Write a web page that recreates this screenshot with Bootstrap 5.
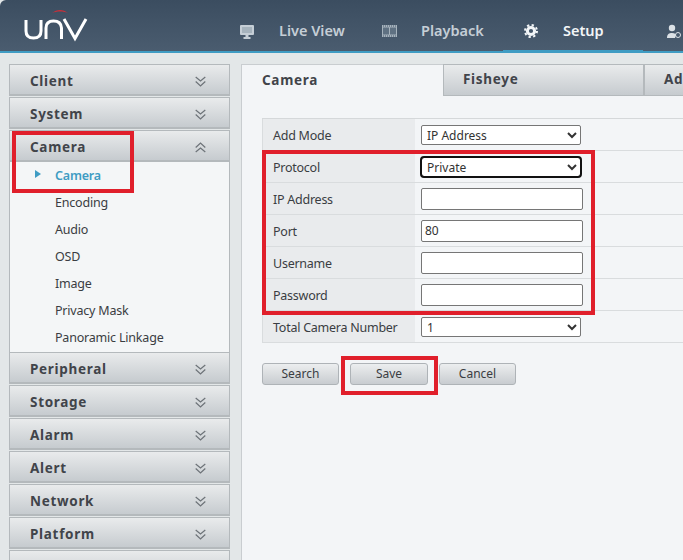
<!DOCTYPE html>
<html lang="en"><head><meta charset="utf-8"><title>Setup</title>
<link href="https://cdn.jsdelivr.net/npm/bootstrap@5.3.0/dist/css/bootstrap.min.css" rel="stylesheet">
<style>
html,body{height:560px;overflow:hidden}
body{background:#e3e7e8;font-family:"Noto Sans","Open Sans",sans-serif;color:#3a3d42;position:relative;font-size:13px}
.topbar{height:53px;background:linear-gradient(#3b4d60,#4a5c6f);border-bottom:2px solid #3f9cc3;border-top-left-radius:6px}
.logo-box{width:219px;height:50px;padding-left:24px}
.navlink{height:50px;padding-top:12px;color:#c5ced6;font-weight:600;font-size:14.5px;flex:none}
.navlink.on{color:#f2f5f7;border-bottom:3px solid #3f9cc3;height:53px}
.nav1{width:163px;padding-left:21px;gap:25px}.nav2{width:121px;gap:24px}.nav3{width:140px;padding-left:21px;gap:25px}
.nav4{padding-left:24px}
.main-row{height:507px;overflow:hidden}
.sidebox{width:241px;padding:11px 11px 0 9px;flex:none}
.sidehead{height:32px;margin-bottom:1px;padding:4px 23px 0 20px;background:linear-gradient(#e9ebec,#c6cbcf);border:1px solid #b4b9bc;border-bottom-width:2px;font-weight:700;font-size:13.5px;letter-spacing:.7px;color:#41444a}
.sidehead.open{margin-bottom:0}
.sublist{background:#f4f6f7;border-left:1px solid #b4b9bc;border-right:1px solid #b4b9bc;padding-bottom:1px}
.subitem{height:27px;padding:1px 0 0 45px;font-size:12.5px;letter-spacing:-.2px;color:#3a3d42;position:relative}
.subitem.on{color:#3f9cc3;font-weight:600}
.subitem svg{position:absolute;left:25px;top:8px}
.panel{width:442px;margin-top:11px;background:#f3f5f7;border-left:1px solid #c9cdd0;overflow:hidden;flex:none}
.tabs{height:32px}
.tabb{width:201px;height:32px;padding:0 0 1px 19px;font-weight:700;font-size:13.5px;letter-spacing:.7px;color:#41444a;background:linear-gradient(#e9ebec,#c6cbcf);border:1px solid #b4b9bc;flex:none}
.tabb.on{padding-left:20px;background:#f3f5f7;border:0;border-top:1px solid #c9cdd0}
.formbox{margin:22px 0 0 20px;border-top:1px solid #d5d8da}
.frow{height:32px;border-bottom:1px solid #d9dcde}
.flabel{width:153px;height:31px;background:#e9ebed;padding:4px 0 0 10px;font-size:12.500px;letter-spacing:-.25px;color:#3a3d42;border-left:1px solid #d9dcde;flex:none}
.fval{padding-left:6px}
.fsel,.finput{font-family:"Noto Sans","Open Sans",sans-serif;font-size:12px;color:#333;background:#fff;border:1px solid #767676;border-radius:2px;padding:0 0 0 3px;display:block}
.fsel{width:160px;height:20px;padding-left:1px}
.fsel.focus{outline:2px solid #111;outline-offset:-1px;border-radius:3px}
.finput{width:162px;height:22px}
.actions{margin:20px 0 0 20px;gap:11px}
.actbtn{width:77px;height:22px;padding:0;background:linear-gradient(#eceeef,#c8ccd0);border:1px solid #aeb3b7;border-radius:3px;font-size:12px;color:#3a3d42;line-height:1}
.actbtn.wider{width:78px}
.actbtn:hover{background:linear-gradient(#eceeef,#c8ccd0);color:#3a3d42;border-color:#aeb3b7}
.redbox{position:absolute;border:4px solid #e01f2b;pointer-events:none}
.rb1{left:12px;top:131px;width:122px;height:62px}
.rb2{left:262px;top:150px;width:333px;height:165px}
.rb3{left:341px;top:356px;width:97px;height:39px}
</style></head>
<body>
<div class="topbar d-flex align-items-start">
  <div class="logo-box d-flex align-items-center">
    <svg width="64" height="34" viewBox="0 0 64 34" fill="none"><path d="M28 5c5-4 11-4 16 0c-5-2-11-2-16 0z" fill="#c8303a"/><path d="M2 12v11q0 7 7.500 7t7.500-7V12" stroke="#fff" stroke-width="3"/><path d="M22 31V20q0-7 7.500-7t8 7v11" stroke="#fff" stroke-width="3"/><path d="M40 11l11 19.500L62 11" stroke="#fff" stroke-width="3"/></svg>
  </div>
  <div class="navlink nav1 d-flex align-items-center">
    <svg width="14" height="15" viewBox="0 0 14 15"><rect x="0" y="1" width="14" height="10" rx="1" fill="#c5ced6"/><rect x="2" y="3" width="10" height="6" fill="#a6b3bd"/><rect x="5.500" y="11" width="3" height="2" fill="#c5ced6"/><rect x="3.500" y="13" width="7" height="2" fill="#c5ced6"/></svg>
    <span>Live View</span></div>
  <div class="navlink nav2 d-flex align-items-center">
    <svg width="15" height="12" viewBox="0 0 15 12"><rect width="15" height="12" fill="#a6b3bd"/><rect x="1" y="2.500" width="6" height="7" fill="#5f7182"/><rect x="8" y="2.500" width="6" height="7" fill="#5f7182"/><path d="M1 1h13M1 11h13" stroke="#46596c" stroke-dasharray="1 1"/></svg>
    <span>Playback</span></div>
  <div class="navlink nav3 on d-flex align-items-center">
    <svg width="14" height="14" viewBox="0 0 14 14"><circle cx="7" cy="7" r="3.600" fill="none" stroke="#f2f5f7" stroke-width="3"/><circle cx="7" cy="7" r="6" fill="none" stroke="#f2f5f7" stroke-width="2" stroke-dasharray="2.300 2.400"/></svg>
    <span>Setup</span></div>
  <div class="navlink nav4 d-flex align-items-center">
    <svg width="15" height="15" viewBox="0 0 15 15"><circle cx="5" cy="4" r="3.200" fill="#dbe1e6"/><path d="M0 14c0-4 2-5 5-5s4 1 4 2l-1 3z" fill="#dbe1e6"/><circle cx="11" cy="11" r="2.500" fill="none" stroke="#dbe1e6"/></svg>
  </div>
</div>
<div class="main-row d-flex">
  <div class="sidebox">
    <div class="sidehead d-flex align-items-center justify-content-between"><span>Client</span><svg width="11" height="11" viewBox="0 0 11 11" fill="none" stroke="#6d7378" stroke-width="1.200"><path d="M.7 1l4.800 4 4.800-4M.7 5.500l4.800 4.500 4.800-4.500"/></svg></div>
    <div class="sidehead d-flex align-items-center justify-content-between"><span>System</span><svg width="11" height="11" viewBox="0 0 11 11" fill="none" stroke="#6d7378" stroke-width="1.200"><path d="M.7 1l4.800 4 4.800-4M.7 5.500l4.800 4.500 4.800-4.500"/></svg></div>
    <div class="sidehead open d-flex align-items-center justify-content-between"><span>Camera</span><svg width="11" height="11" viewBox="0 0 11 11" fill="none" stroke="#6d7378" stroke-width="1.200"><path d="M.7 10l4.800-4 4.800 4M.7 5.500L5.500 1l4.800 4.500"/></svg></div>
    <div class="sublist">
      <div class="subitem on d-flex align-items-center"><svg width="6" height="8" viewBox="0 0 6 8"><path d="M0 0l6 4-6 4z" fill="#3f9cc3"/></svg>Camera</div>
      <div class="subitem d-flex align-items-center">Encoding</div>
      <div class="subitem d-flex align-items-center">Audio</div>
      <div class="subitem d-flex align-items-center">OSD</div>
      <div class="subitem d-flex align-items-center">Image</div>
      <div class="subitem d-flex align-items-center">Privacy Mask</div>
      <div class="subitem d-flex align-items-center">Panoramic Linkage</div>
    </div>
    <div class="sidehead d-flex align-items-center justify-content-between"><span>Peripheral</span><svg width="11" height="11" viewBox="0 0 11 11" fill="none" stroke="#6d7378" stroke-width="1.200"><path d="M.7 1l4.800 4 4.800-4M.7 5.500l4.800 4.500 4.800-4.500"/></svg></div>
    <div class="sidehead d-flex align-items-center justify-content-between"><span>Storage</span><svg width="11" height="11" viewBox="0 0 11 11" fill="none" stroke="#6d7378" stroke-width="1.200"><path d="M.7 1l4.800 4 4.800-4M.7 5.500l4.800 4.500 4.800-4.500"/></svg></div>
    <div class="sidehead d-flex align-items-center justify-content-between"><span>Alarm</span><svg width="11" height="11" viewBox="0 0 11 11" fill="none" stroke="#6d7378" stroke-width="1.200"><path d="M.7 1l4.800 4 4.800-4M.7 5.500l4.800 4.500 4.800-4.500"/></svg></div>
    <div class="sidehead d-flex align-items-center justify-content-between"><span>Alert</span><svg width="11" height="11" viewBox="0 0 11 11" fill="none" stroke="#6d7378" stroke-width="1.200"><path d="M.7 1l4.800 4 4.800-4M.7 5.500l4.800 4.500 4.800-4.500"/></svg></div>
    <div class="sidehead d-flex align-items-center justify-content-between"><span>Network</span><svg width="11" height="11" viewBox="0 0 11 11" fill="none" stroke="#6d7378" stroke-width="1.200"><path d="M.7 1l4.800 4 4.800-4M.7 5.500l4.800 4.500 4.800-4.500"/></svg></div>
    <div class="sidehead d-flex align-items-center justify-content-between"><span>Platform</span><svg width="11" height="11" viewBox="0 0 11 11" fill="none" stroke="#6d7378" stroke-width="1.200"><path d="M.7 1l4.800 4 4.800-4M.7 5.500l4.800 4.500 4.800-4.500"/></svg></div>
    <div class="sidehead"></div>
  </div>
  <div class="panel">
    <div class="tabs d-flex">
      <div class="tabb on d-flex align-items-center">Camera</div>
      <div class="tabb d-flex align-items-center">Fisheye</div>
      <div class="tabb d-flex align-items-center">Ad</div>
    </div>
    <div class="formbox">
      <div class="frow d-flex"><div class="flabel d-flex align-items-center">Add Mode</div><div class="fval d-flex align-items-center"><select class="fsel"><option>IP Address</option></select></div></div>
      <div class="frow d-flex"><div class="flabel d-flex align-items-center">Protocol</div><div class="fval d-flex align-items-center"><select class="fsel focus"><option>Private</option></select></div></div>
      <div class="frow d-flex"><div class="flabel d-flex align-items-center">IP Address</div><div class="fval d-flex align-items-center"><input class="finput" type="text"></div></div>
      <div class="frow d-flex"><div class="flabel d-flex align-items-center">Port</div><div class="fval d-flex align-items-center"><input class="finput" type="text" value="80"></div></div>
      <div class="frow d-flex"><div class="flabel d-flex align-items-center">Username</div><div class="fval d-flex align-items-center"><input class="finput" type="text"></div></div>
      <div class="frow d-flex"><div class="flabel d-flex align-items-center">Password</div><div class="fval d-flex align-items-center"><input class="finput" type="text"></div></div>
      <div class="frow d-flex"><div class="flabel d-flex align-items-center">Total Camera Number</div><div class="fval d-flex align-items-center"><select class="fsel"><option>1</option></select></div></div>
    </div>
    <div class="actions d-flex">
      <button class="btn actbtn" type="button">Search</button>
      <button class="btn actbtn wider" type="button">Save</button>
      <button class="btn actbtn" type="button">Cancel</button>
    </div>
  </div>
</div>
<div class="redbox rb1"></div>
<div class="redbox rb2"></div>
<div class="redbox rb3"></div>
</body></html>
